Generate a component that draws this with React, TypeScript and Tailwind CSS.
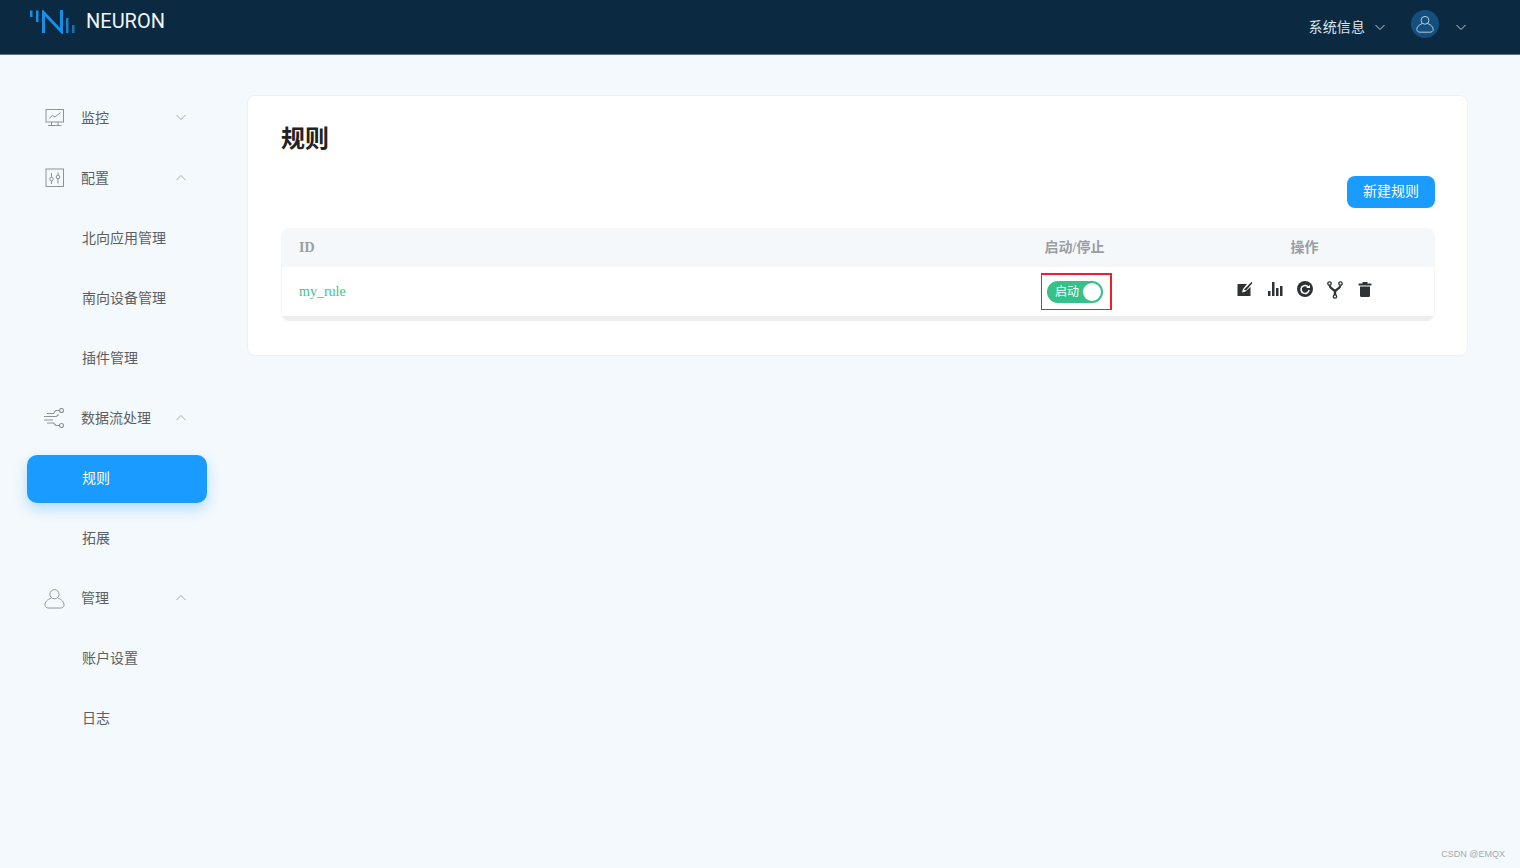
import type { ReactNode } from "react";

const cjk = "font-['Noto_Sans_CJK_SC',sans-serif]";

function Chevron({ up = false, className = "" }: { up?: boolean; className?: string }) {
    return (
        <svg width="12" height="7" viewBox="0 0 12 7" fill="none" className={className}>
            <path d={up ? "M1.5 6L6 1.5L10.5 6" : "M1.5 1L6 5.5L10.5 1"} stroke="currentColor" strokeWidth="1" />
        </svg>
    );
}

function Logo() {
    return (
        <svg width="46" height="24" viewBox="0 0 46 24" fill="none">
            <rect x="0" y="0.5" width="2.5" height="6.5" fill="#1590e6" />
            <rect x="6" y="0.5" width="2.5" height="11.5" fill="#1590e6" />
            <path d="M13.5 23V2.5L31.5 21.5V0" stroke="#1590e6" strokeWidth="3" fill="none" />
            <rect x="36" y="8" width="2.5" height="15" fill="#1680cc" />
            <rect x="42" y="15" width="2.5" height="8" fill="#1470b2" />
        </svg>
    );
}

function MonitorIcon() {
    return (
        <svg width="20" height="20" viewBox="0 0 20 20" fill="none" stroke="#8d9399" strokeWidth="1">
            <rect x="1" y="1.5" width="17.5" height="12.5" />
            <path d="M4 10.5L7.5 7.5L10 9L15.5 4.5" />
            <path d="M6.5 14V17M13 14V17M3 17.5H16.5" />
        </svg>
    );
}

function SlidersIcon() {
    return (
        <svg width="20" height="20" viewBox="0 0 20 20" fill="none" stroke="#8d9399" strokeWidth="1">
            <rect x="1" y="1" width="17.5" height="17.5" />
            <path d="M6.5 5V9M6.5 13V16M13 4.5V7M13 11V15.5" />
            <circle cx="6.5" cy="11" r="1.8" />
            <circle cx="13" cy="9" r="1.8" />
        </svg>
    );
}

function FlowIcon() {
    return (
        <svg width="21" height="20" viewBox="0 0 21 20" fill="none" stroke="#8d9399" strokeWidth="1.1">
            <circle cx="17.5" cy="2.5" r="2" />
            <circle cx="17.5" cy="17.5" r="2" />
            <path d="M3 5.5H9.5L12 2.5H15.5M0 8.5H12.5L14.5 6.5M0 12H9M3 15H9.5L12 17.5H15.5" />
        </svg>
    );
}

function UserIcon({ color, size }: { color: string; size: number }) {
    return (
        <svg width={size} height={size} viewBox="0 0 22 22" fill="none" stroke={color} strokeWidth="1">
            <circle cx="11" cy="6.5" r="4.8" />
            <path d="M7.5 10.5C3.5 12 1 14.5 1 18C1 20 3 21 5 21H17C19 21 21 20 21 18C21 14.5 18.5 12 14.5 10.5" />
        </svg>
    );
}

function NavGroup({ icon, label, up }: { icon: ReactNode; label: string; up: boolean }) {
    return (
        <div className="h-[60px] flex items-center pl-[44px] pr-[60px] w-[247px]">
            <div className="w-[21px] flex justify-center">{icon}</div>
            <span className="ml-[16px] pb-[2px] text-[14px] text-[#5b5f63] flex-1">{label}</span>
            <Chevron up={up} className="text-[#a6abb0] -mt-[2px]" />
        </div>
    );
}

function NavItem({ label, active = false }: { label: string; active?: boolean }) {
    return (
        <div className="h-[60px] flex items-center pl-[27px] pt-[2px]">
            <div
                className={`w-[180px] h-[48px] flex items-center pl-[55px] pb-[4px] rounded-[10px] text-[14px] ${
                    active
                        ? "bg-[#1a9bff] text-white shadow-[0_6px_14px_rgba(26,155,255,0.3)]"
                        : "text-[#5b5f63]"
                }`}
            >
                {label}
            </div>
        </div>
    );
}

export default function App() {
    return (
        <div className={`w-[1520px] h-[868px] overflow-hidden bg-[#f4f9fd] relative ${cjk}`}>
            <header className="h-[55px] bg-[#0b2a42] border-b border-[#5d7386] flex items-start pl-[30px] pr-[53px]">
                <div className="mt-[10px]">
                    <Logo />
                </div>
                <span className="ml-[10px] mt-[7px] text-[20px] leading-[28px] text-[#f0f4f7] font-['Roboto',sans-serif]">
                    NEURON
                </span>
                <div className="ml-auto flex items-center h-[54px]">
                    <span className="text-[14px] pb-[2px] tracking-[0.1px] text-[#dfe5ea]">系统信息</span>
                    <Chevron className="ml-[9px] text-[#c4ccd3]" />
                    <div className="ml-[25px] w-[28px] h-[28px] rounded-full bg-[#14507f] flex items-center justify-center -mt-[6px]">
                        <UserIcon color="#dbe5ed" size={18} />
                    </div>
                    <Chevron className="ml-[16px] text-[#c4ccd3]" />
                </div>
            </header>

            <div className="flex">
                <aside className="w-[247px] pt-[33px] shrink-0">
                    <NavGroup icon={<MonitorIcon />} label="监控" up={false} />
                    <NavGroup icon={<SlidersIcon />} label="配置" up />
                    <NavItem label="北向应用管理" />
                    <NavItem label="南向设备管理" />
                    <NavItem label="插件管理" />
                    <NavGroup icon={<FlowIcon />} label="数据流处理" up />
                    <NavItem label="规则" active />
                    <NavItem label="拓展" />
                    <NavGroup icon={<UserIcon color="#8d9399" size={21} />} label="管理" up />
                    <NavItem label="账户设置" />
                    <NavItem label="日志" />
                </aside>

                <main className="mt-[40px] w-[1221px] h-[261px] bg-white rounded-[8px] border border-[#edf1f5] pl-[33px] pr-[32px]">
                    <h1 className="mt-[23px] h-[36px] text-[24px] leading-[36px] font-bold text-[#222]">规则</h1>
                    <div className="mt-[21px] flex justify-end">
                        <button className="w-[88px] h-[32px] pb-[4px] rounded-[8px] bg-[#1a9bff] text-white text-[14px]">
                            新建规则
                        </button>
                    </div>
                    <div className="mt-[20px] rounded-[8px] overflow-hidden border-x border-[#f4f6f8] font-['Liberation_Serif','Noto_Sans_CJK_SC',serif]">
                        <div className="h-[39px] bg-[#f4f8fb] flex items-center text-[14px] font-bold text-[#9a9ea3]">
                            <div className="flex-1 pl-[17px]">ID</div>
                            <div className="w-[200px] text-center pl-[1px]">启动/停止</div>
                            <div className="w-[260px] text-center pl-[1px]">操作</div>
                        </div>
                        <div className="h-[49px] bg-white flex items-center">
                            <div className="flex-1 pl-[17px] pb-[1px] text-[14px] text-[#3cc68f]">my_rule</div>
                            <div className="w-[200px] flex justify-center pl-[4px]">
                                <div className="w-[71px] h-[37px] bg-[#f01e28] p-[1.5px]">
                                    <div className="w-full h-full bg-white flex items-center pl-[5px]">
                                        <div className="w-[56px] h-[22px] rounded-full bg-[#36c08a] flex items-center justify-between pl-[8px] pr-[2px]">
                                            <span className="text-[12px] text-white">启动</span>
                                            <span className="w-[18px] h-[18px] rounded-full bg-white" />
                                        </div>
                                    </div>
                                </div>
                            </div>
                            <div className="w-[260px] flex justify-center gap-[14px] -mt-[4px] pl-[1px]">
                                <svg width="16" height="16" viewBox="0 0 16 16" fill="#2f3235">
                                    <path d="M0.5 3H10L6 8L5 11.5L8.5 10.5L13.5 6V15H0.5Z" />
                                    <path d="M7 8.5L13 2.5L14.5 1L15.5 2L9 9.5Z" />
                                </svg>
                                <svg width="16" height="16" viewBox="0 0 16 16" fill="#2f3235">
                                    <rect x="1" y="10" width="2.5" height="5" />
                                    <rect x="5" y="1" width="2.5" height="14" />
                                    <rect x="9" y="7" width="2.5" height="8" />
                                    <rect x="13" y="5" width="2.5" height="10" />
                                </svg>
                                <svg width="16" height="16" viewBox="0 0 16 16">
                                    <circle cx="8" cy="8" r="8" fill="#2f3235" />
                                    <path d="M11.5 6.5A4 4 0 1 0 12 9" stroke="#fff" strokeWidth="1.6" fill="none" />
                                    <path d="M9 7H13V4Z" fill="#fff" />
                                </svg>
                                <svg width="16" height="18" viewBox="0 0 16 18" fill="none" stroke="#2f3235">
                                    <circle cx="2.5" cy="2.5" r="1.7" strokeWidth="1.3" />
                                    <circle cx="13.5" cy="2.5" r="1.7" strokeWidth="1.3" />
                                    <circle cx="8" cy="15.5" r="1.7" strokeWidth="1.3" />
                                    <path d="M2.7 4.5C3 8.5 8 8 8 11V14M13.3 4.5C13 8.5 8 8 8 11" strokeWidth="2.4" />
                                </svg>
                                <svg width="16" height="16" viewBox="0 0 16 16" fill="#2f3235">
                                    <rect x="1.5" y="2.5" width="13" height="2" rx="0.5" />
                                    <rect x="5.5" y="1" width="5" height="2" rx="0.5" />
                                    <path d="M3 5.5H13V14.5C13 15.3 12.5 16 11.5 16H4.5C3.5 16 3 15.3 3 14.5Z" />
                                </svg>
                            </div>
                        </div>
                        <div className="h-[5px] bg-[#ebedef]" />
                    </div>
                </main>
            </div>

            <div className="absolute right-[15px] bottom-[7px] text-[9px] leading-[14px] text-[#a5a9ad] font-['Liberation_Sans',sans-serif]">
                CSDN @EMQX
            </div>
        </div>
    );
}
